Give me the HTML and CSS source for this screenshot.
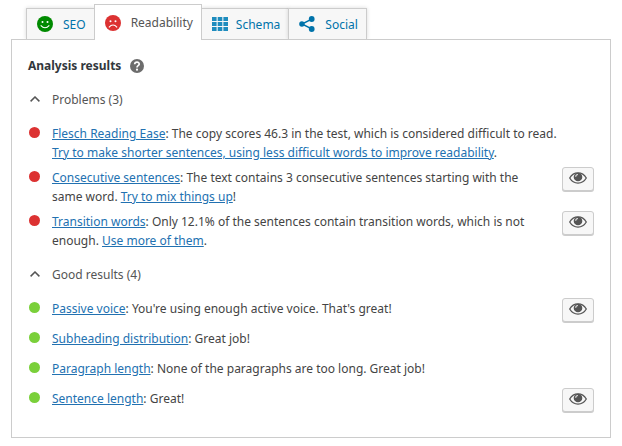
FILE: index.html
```html
<!DOCTYPE html>
<html lang="en">
<head>
<meta charset="utf-8">
<meta name="viewport" content="width=device-width, initial-scale=1">
<title>Readability analysis</title>
<link rel="stylesheet" href="styles.css">
</head>
<body>
<svg class="sprite" aria-hidden="true">
  <symbol id="eye" viewBox="0 0 18 12">
    <path d="M.7 6C2.6 2.7 5.5.9 9 .9S15.400 2.700 17.300 6C15.400 9.300 12.500 11.100 9 11.100S2.600 9.300.7 6z" fill="none" stroke="#555" stroke-width="1.300"/>
    <circle cx="9" cy="5" r="4.300" fill="#555"/>
    <path d="M6.700 4.800A2.300 2.300 0 0 1 9 2.500" fill="none" stroke="#ddd" stroke-width="1.200"/>
  </symbol>
  <symbol id="chevron" viewBox="0 0 10 6">
    <path d="M.6 5.400 5 1l4.400 4.400" fill="none" stroke="#555" stroke-width="1.500"/>
  </symbol>
</svg>
<nav>
  <ul class="tabs">
    <li><a class="tab" href="#seo">
      <svg width="16" height="16" viewBox="0 0 16 16" aria-hidden="true"><circle cx="8" cy="8" r="8" fill="#008a00"/><circle cx="5.500" cy="6" r="1" fill="#fff"/><circle cx="10.500" cy="6" r="1" fill="#fff"/><path d="M3.700 9.300Q8 14.200 12.300 9.300" fill="none" stroke="#fff" stroke-width="1.100"/></svg>
      SEO</a></li>
    <li><a class="tab tab-active" href="#readability" aria-current="page">
      <svg width="16" height="16" viewBox="0 0 16 16" aria-hidden="true"><circle cx="8" cy="8" r="8" fill="#dc3232"/><circle cx="5.500" cy="6.300" r="1" fill="#fff"/><circle cx="10.500" cy="6.300" r="1" fill="#fff"/><path d="M3.900 12.300Q8 7.800 12.100 12.300" fill="none" stroke="#fff" stroke-width="1.100"/></svg>
      Readability</a></li>
    <li><a class="tab tab-tight" href="#schema">
      <svg width="16" height="14" viewBox="0 0 16 14" aria-hidden="true"><path d="M0 0h4.600v4H0zM5.700 0h4.600v4H5.700zM11.400 0H16v4h-4.600zM0 5h4.600v4H0zM5.700 5h4.600v4H5.700zM11.400 5H16v4h-4.600zM0 10h4.600v4H0zM5.700 10h4.600v4H5.700zM11.400 10H16v4h-4.600z" fill="#1e8cbe"/></svg>
      Schema</a></li>
    <li><a class="tab" href="#social">
      <svg width="16" height="16" viewBox="0 0 16 16" aria-hidden="true"><path d="M12.700 3.200 3 8l9.700 4.800" fill="none" stroke="#0073aa" stroke-width="1.500"/><circle cx="2.900" cy="8" r="2.700" fill="#0073aa"/><circle cx="12.700" cy="3" r="2.900" fill="#0073aa"/><circle cx="12.700" cy="13" r="2.900" fill="#0073aa"/></svg>
      Social</a></li>
  </ul>
</nav>
<main class="panel">
  <header class="title">
    <h1>Analysis results</h1>
    <a class="help" href="#help" aria-label="Help"><svg width="14" height="14" viewBox="0 0 14 14" aria-hidden="true"><circle cx="7" cy="7" r="7" fill="#6d6d6d"/><path d="M4.700 5.200C4.800 2.400 9.300 2.500 9.200 5.100 9.100 6.700 7 6.600 7 8.500" fill="none" stroke="#fff" stroke-width="1.700"/><circle cx="7" cy="10.700" r="1.100" fill="#fff"/></svg></a>
  </header>
  <section>
    <h2><button class="toggle" type="button" aria-expanded="true"><svg width="10" height="6"><use href="#chevron"/></svg>Problems (3)</button></h2>
    <ul class="results bad">
      <li><p><a href="#flesch">Flesch Reading Ease</a>: The copy scores 46.3 in the test, which is considered difficult to read. <a href="#shorter">Try to make shorter sentences, using less difficult words to improve readability</a>.</p></li>
      <li><p><a href="#consecutive">Consecutive sentences</a>: The text contains 3 consecutive sentences starting with the same word. <a href="#mix">Try to mix things up</a>!</p><button class="mark" type="button" aria-label="Highlight consecutive sentences"><svg width="18" height="12"><use href="#eye"/></svg></button></li>
      <li><p><a href="#transition">Transition words</a>: Only 12.1% of the sentences contain transition words, which is not enough. <a href="#more">Use more of them</a>.</p><button class="mark" type="button" aria-label="Highlight transition words"><svg width="18" height="12"><use href="#eye"/></svg></button></li>
    </ul>
  </section>
  <section>
    <h2><button class="toggle" type="button" aria-expanded="true"><svg width="10" height="6"><use href="#chevron"/></svg>Good results (4)</button></h2>
    <ul class="results good">
      <li><p><a href="#passive">Passive voice</a>: You're using enough active voice. That's great!</p><button class="mark" type="button" aria-label="Highlight passive voice"><svg width="18" height="12"><use href="#eye"/></svg></button></li>
      <li><p><a href="#subheading">Subheading distribution</a>: Great job!</p></li>
      <li><p><a href="#paragraph">Paragraph length</a>: None of the paragraphs are too long. Great job!</p></li>
      <li><p><a href="#sentence">Sentence length</a>: Great!</p><button class="mark" type="button" aria-label="Highlight sentence length"><svg width="18" height="12"><use href="#eye"/></svg></button></li>
    </ul>
  </section>
</main>
</body>
</html>
```
FILE: styles.css
```css
* { box-sizing: border-box; }
body {
  margin: 0;
  padding: 4px 11px 8px;
  background: #fff;
  color: #444;
  font: 12px/19px "Noto Sans", "Open Sans", sans-serif;
}
.sprite { display: none; }
ul, h1, h2, p { margin: 0; padding: 0; font-size: inherit; }
ul { list-style: none; }
svg { display: block; flex: none; }
a { color: #2271b1; }

.tabs {
  display: flex;
  align-items: flex-end;
  padding-left: 15px;
}
.tab {
  display: flex;
  align-items: center;
  gap: 10px;
  height: 31px;
  padding: 0 8px 0 10px;
  border: 1px solid #ccc;
  border-bottom: 0;
  background: #f7f7f7;
  box-shadow: 0 0 4px rgba(0, 0, 0, 0.15);
  clip-path: inset(-4px -4px 0 -4px);
  color: #0073aa;
  text-decoration: none;
}
.tabs li + li { margin-left: -1px; }
.tab-tight { gap: 8px; }
.tab-active {
  position: relative;
  z-index: 1;
  height: 36px;
  margin-bottom: -1px;
  background: #fff;
  box-shadow: none;
  color: #555;
}
.panel {
  padding: 16px 16px 24px;
  border: 1px solid #ccc;
}
.title {
  display: flex;
  align-items: center;
  gap: 9px;
}
h1 { color: #32373c; font-weight: 700; }
h2 { margin: 15px 0 14px; font-weight: 400; }
.toggle {
  display: flex;
  align-items: center;
  gap: 12px;
  padding: 0 0 0 2px;
  border: 0;
  background: none;
  color: #555;
  font: inherit;
}
.toggle svg { margin-bottom: 2px; }
.results {
  display: grid;
  gap: 5px;
}
.results li {
  display: flex;
  align-items: flex-start;
  min-height: 25px;
}
.results li::before {
  content: "";
  flex: none;
  width: 11px;
  height: 11px;
  margin: 4px 12px 0 1px;
  border-radius: 50%;
  background: #dc3232;
}
.results.good li::before { background: #7ad03a; }
.results p {
  flex: 1;
  padding: 1px 20px 0 0;
}
.mark {
  display: grid;
  justify-items: center;
  width: 32px;
  height: 24px;
  padding: 4px 0 0;
  border: 1px solid #ccc;
  border-radius: 3px;
  background: #f7f7f7;
  box-shadow: 0 1px 0 #ccc;
}
```
